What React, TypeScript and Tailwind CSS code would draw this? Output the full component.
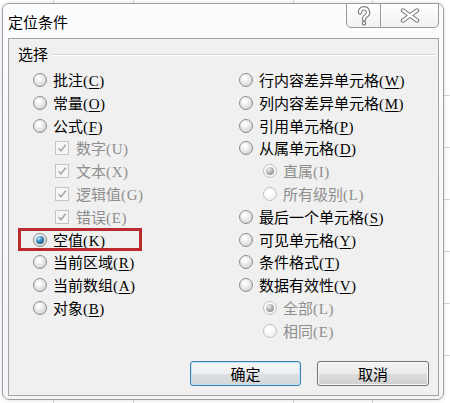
import React from 'react';

const cjk = "font-['Noto_Sans_CJK_SC','Noto_Sans',sans-serif]";

function Mn({ k, disabled }: { k: string; disabled?: boolean }) {
  return (
    <span className="font-['Liberation_Serif',serif] text-[15px] tracking-[0.6px]">
      (<span className={disabled ? '' : 'underline underline-offset-[2px]'}>{k}</span>)
    </span>
  );
}

function Label({ text, k, disabled }: { text: string; k: string; disabled?: boolean }) {
  return (
    <span className={`${cjk} text-[15px] leading-[18px] whitespace-nowrap ${disabled ? 'text-[#8e8e8e]' : 'text-black'}`}>
      {text}
      <Mn k={k} disabled={disabled} />
    </span>
  );
}

function RadioDot({ checked, disabled }: { checked?: boolean; disabled?: boolean }) {
  return (
    <span
      className={`shrink-0 w-[14px] h-[14px] rounded-full border flex items-center justify-center ${
        disabled
          ? 'border-[#c2c2c2] bg-[radial-gradient(circle_at_40%_35%,#ffffff_20%,#ececec_90%)]'
          : 'border-[#8c8c8c] bg-[radial-gradient(circle_at_40%_35%,#ffffff_10%,#cfcfcf_85%)]'
      }`}
    >
      {checked && (
        <span
          className={`w-[8px] h-[8px] rounded-full ${
            disabled
              ? 'bg-[radial-gradient(circle_at_35%_30%,#eeeeee_0%,#a9a9a9_55%,#8c8c8c_100%)]'
              : 'bg-[radial-gradient(circle_at_35%_30%,#c8ecff_0%,#3b8dc6_40%,#0e3c62_100%)]'
          }`}
        />
      )}
    </span>
  );
}

function CheckDot() {
  return (
    <span className="shrink-0 w-[14px] h-[14px] border border-[#c4c4c4] bg-[#f6f6f6] flex items-center justify-center">
      <svg width="10" height="10" viewBox="0 0 10 10">
        <path d="M1.5 5.2 L4 7.8 L8.7 1.8" fill="none" stroke="#a8a8a8" strokeWidth="1.6" />
      </svg>
    </span>
  );
}

type Item = {
  kind: 'radio' | 'check';
  text: string;
  k: string;
  indent?: boolean;
  checked?: boolean;
  disabled?: boolean;
  mark?: boolean;
};

const leftItems: Item[] = [
  { kind: 'radio', text: '批注', k: 'C' },
  { kind: 'radio', text: '常量', k: 'O' },
  { kind: 'radio', text: '公式', k: 'F' },
  { kind: 'check', text: '数字', k: 'U', indent: true, disabled: true },
  { kind: 'check', text: '文本', k: 'X', indent: true, disabled: true },
  { kind: 'check', text: '逻辑值', k: 'G', indent: true, disabled: true },
  { kind: 'check', text: '错误', k: 'E', indent: true, disabled: true },
  { kind: 'radio', text: '空值', k: 'K', checked: true, mark: true },
  { kind: 'radio', text: '当前区域', k: 'R' },
  { kind: 'radio', text: '当前数组', k: 'A' },
  { kind: 'radio', text: '对象', k: 'B' },
];

const rightItems: Item[] = [
  { kind: 'radio', text: '行内容差异单元格', k: 'W' },
  { kind: 'radio', text: '列内容差异单元格', k: 'M' },
  { kind: 'radio', text: '引用单元格', k: 'P' },
  { kind: 'radio', text: '从属单元格', k: 'D' },
  { kind: 'radio', text: '直属', k: 'I', indent: true, checked: true, disabled: true },
  { kind: 'radio', text: '所有级别', k: 'L', indent: true, disabled: true },
  { kind: 'radio', text: '最后一个单元格', k: 'S' },
  { kind: 'radio', text: '可见单元格', k: 'Y' },
  { kind: 'radio', text: '条件格式', k: 'T' },
  { kind: 'radio', text: '数据有效性', k: 'V' },
  { kind: 'radio', text: '全部', k: 'L', indent: true, checked: true, disabled: true },
  { kind: 'radio', text: '相同', k: 'E', indent: true, disabled: true },
];

function Row({ item, checkIndent }: { item: Item; checkIndent: string }) {
  return (
    <div className={`relative h-[22.8px] flex items-center ${item.indent ? checkIndent : ''}`}>
      {item.mark && (
        <span className="absolute left-[-15px] top-[0px] w-[124px] h-[23px] border-[3px] border-[#bb2a31]" />
      )}
      {item.kind === 'radio' ? (
        <RadioDot checked={item.checked} disabled={item.disabled} />
      ) : (
        <CheckDot />
      )}
      <span className={item.kind === 'radio' ? 'ml-[6px]' : 'ml-[7px]'}>
        <Label text={item.text} k={item.k} disabled={item.disabled} />
      </span>
    </div>
  );
}

function HelpIcon() {
  return (
    <svg width="16" height="20" viewBox="0 0 16 20">
      <g fill="none" strokeLinecap="round" strokeLinejoin="round">
        <path d="M4 6.5 A4 4 0 1 1 10 9.8 C8.6 10.7 8 11.3 8 12.8 V13.3" stroke="#7c7c7c" strokeWidth="4.4" />
        <path d="M8 17 L8 17.2" stroke="#7c7c7c" strokeWidth="4.4" />
        <path d="M4 6.5 A4 4 0 1 1 10 9.8 C8.6 10.7 8 11.3 8 12.8 V13.3" stroke="#ffffff" strokeWidth="2.2" />
        <path d="M8 17 L8 17.2" stroke="#ffffff" strokeWidth="2.2" />
      </g>
    </svg>
  );
}

function CloseIcon() {
  return (
    <svg width="20" height="15" viewBox="0 0 20 15">
      <g fill="none" strokeLinecap="round">
        <path d="M3 2.5 L17 12.5 M17 2.5 L3 12.5" stroke="#7c7c7c" strokeWidth="4.4" />
        <path d="M3 2.5 L17 12.5 M17 2.5 L3 12.5" stroke="#ffffff" strokeWidth="2.2" />
      </g>
    </svg>
  );
}

export default function App() {
  return (
    <div className="relative w-[450px] h-[403px] overflow-hidden bg-white">
      <svg className="absolute inset-0" width="450" height="403">
        <g stroke="#d6d6d6" strokeWidth="1">
          <line x1="53.5" y1="0" x2="53.5" y2="403" />
          <line x1="133.5" y1="0" x2="133.5" y2="403" />
          <line x1="293.5" y1="0" x2="293.5" y2="403" />
          <line x1="372.5" y1="0" x2="372.5" y2="403" />
          <line x1="440" y1="95.5" x2="450" y2="95.5" />
          <line x1="440" y1="147.5" x2="450" y2="147.5" />
          <line x1="440" y1="199.5" x2="450" y2="199.5" />
          <line x1="440" y1="251.5" x2="450" y2="251.5" />
          <line x1="440" y1="303.5" x2="450" y2="303.5" />
          <line x1="440" y1="355.5" x2="450" y2="355.5" />
        </g>
      </svg>

      <div className="relative ml-[2px] mt-[3px] w-[442px] h-[397px] rounded-[7px] border border-[#9aa0a6] bg-[linear-gradient(180deg,#fbfcfd_0%,#f3f5f7_100%)] shadow-[0_0_4px_rgba(0,0,0,0.15)] flex flex-col">
        {/* title bar */}
        <div className="h-[34px] flex items-start justify-between">
          <span className={`${cjk} ml-[5px] mt-[9px] text-[15px] leading-[18px] text-black`}>定位条件</span>
          <div className="mr-[4px] mt-[-1px] flex h-[25px]">
            <div className="w-[35px] h-full rounded-bl-[5px] border border-[#9a9a9a] bg-[linear-gradient(180deg,#ffffff_0%,#f1f1f1_100%)] flex items-center justify-center">
              <HelpIcon />
            </div>
            <div className="w-[58px] h-full rounded-br-[5px] border border-l-0 border-[#9a9a9a] bg-[linear-gradient(180deg,#ffffff_0%,#f1f1f1_100%)] flex items-center justify-center">
              <CloseIcon />
            </div>
          </div>
        </div>

        {/* client area */}
        <div className="ml-[5px] w-[431px] h-[358px] border border-[#a3a3a3] bg-[#f0f0f0] flex flex-col">
          <div className="mt-[5px] h-[20px] flex items-center pl-[9px] pr-[3px]">
            <span className={`${cjk} text-[15px] leading-[18px] text-black`}>选择</span>
            <span className="flex-1 ml-[4px] mt-[1px] border-t border-[#d5d5d5] border-b border-b-white" />
          </div>

          <div className="mt-[4.6px] pl-[24px] grid grid-cols-[206px_1fr]">
            <div className="flex flex-col">
              {leftItems.map((it, i) => (
                <Row key={i} item={it} checkIndent="pl-[22px]" />
              ))}
            </div>
            <div className="flex flex-col">
              {rightItems.map((it, i) => (
                <Row key={i} item={it} checkIndent="pl-[24px]" />
              ))}
            </div>
          </div>

          <div className="mt-auto pb-[9px] pr-[9px] flex justify-end gap-[16px]">
            <button className={`${cjk} w-[111px] h-[25px] rounded-[3px] border border-[#3c7fb1] bg-[linear-gradient(180deg,#f4f6f7_0%,#eceef0_50%,#dee1e3_50%,#d2d6d9_100%)] shadow-[inset_0_0_0_1px_#bfe3f6] text-[15px] leading-[18px] text-black`}>
              确定
            </button>
            <button className={`${cjk} w-[112px] h-[25px] rounded-[3px] border border-[#707070] bg-[linear-gradient(180deg,#f2f2f2_0%,#ebebeb_50%,#dddddd_50%,#cfcfcf_100%)] shadow-[inset_0_0_0_1px_#fbfbfb] text-[15px] leading-[18px] text-black`}>
              取消
            </button>
          </div>
        </div>
      </div>
    </div>
  );
}
